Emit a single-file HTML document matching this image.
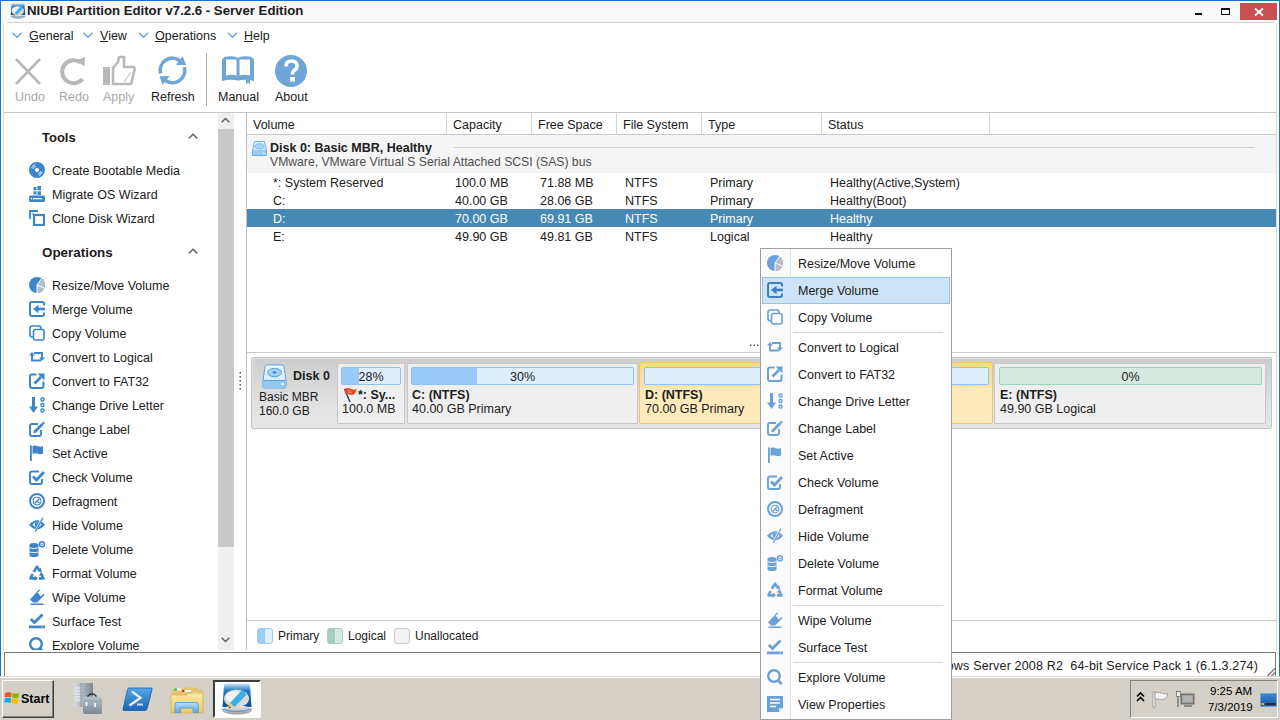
<!DOCTYPE html>
<html><head><meta charset="utf-8">
<style>
*{margin:0;padding:0;box-sizing:border-box}
html,body{width:1280px;height:720px;overflow:hidden;background:#fff}
body{position:relative;font-family:"Liberation Sans",sans-serif;font-size:13px;color:#202020}
.a{position:absolute}
.t{position:absolute;white-space:pre;line-height:16px;font-size:13px}
.b{font-weight:bold}
.hl{position:absolute;height:1px}
.vl{position:absolute;width:1px}
svg{position:absolute;overflow:visible}
</style></head><body>


<svg width="0" height="0" style="position:absolute;left:0;top:0">
<defs>
 <symbol id="i-disc" viewBox="0 0 16 16"><circle cx="8" cy="8" r="8" fill="currentColor"/><circle cx="8" cy="8" r="2" fill="#fff"/><path d="M2.6 6.2 A5.6 5.6 0 0 1 6.2 2.6 M4.1 6.8 A4 4 0 0 1 6.8 4.1 M13.4 9.8 A5.6 5.6 0 0 1 9.8 13.4 M11.9 9.2 A4 4 0 0 1 9.2 11.9" stroke="#fff" stroke-width="0.9" fill="none"/></symbol>
 <symbol id="i-migrate" viewBox="0 0 16 16"><rect x="4.5" y="1" width="3" height="3.3" fill="currentColor"/><rect x="8.5" y="0" width="3.5" height="4.3" fill="currentColor"/><rect x="4.5" y="5.3" width="3" height="3.3" fill="currentColor"/><rect x="8.5" y="5.3" width="3.5" height="3.7" fill="currentColor"/><rect x="0" y="9.5" width="16" height="6.5" rx="1.5" fill="currentColor"/><rect x="4" y="12" width="9" height="1.3" fill="#fff"/><rect x="1.8" y="12" width="1.3" height="1.3" fill="#fff"/></symbol>
 <symbol id="i-clone" viewBox="0 0 16 16"><path d="M1 9 V1 H9" stroke="currentColor" stroke-width="1.8" fill="none"/><rect x="2.6" y="2.6" width="2.2" height="2.2" fill="currentColor" opacity=".5"/><rect x="5" y="5" width="10" height="10" stroke="currentColor" stroke-width="2.2" fill="#fff"/></symbol>
 <symbol id="i-resize" viewBox="0 0 16 16"><circle cx="8" cy="8" r="8" fill="currentColor"/><path d="M8 8 L12.6 1.5 A8 8 0 0 1 8 16 Z" fill="#b5bec8"/><path d="M12.8 1.2 L8 8 L8 16 M8 8 L15.5 11" stroke="#fff" stroke-width="1" fill="none"/></symbol>
 <symbol id="i-merge" viewBox="0 0 16 16"><path d="M15 4.5 V3 Q15 1 13 1 H3 Q1 1 1 3 V13 Q1 15 3 15 H13 Q15 15 15 13 V11.5" stroke="currentColor" stroke-width="2" fill="none"/><path d="M16 8 H8.5" stroke="currentColor" stroke-width="2.6"/><path d="M4 8 L9.5 3.8 L9.5 12.2 Z" fill="currentColor"/></symbol>
 <symbol id="i-copy" viewBox="0 0 16 16"><rect x="1" y="1" width="11" height="11" rx="2.5" stroke="currentColor" stroke-width="1.6" fill="none"/><rect x="4.5" y="4.5" width="10.5" height="10.5" rx="2" stroke="currentColor" stroke-width="1.6" fill="#fff"/></symbol>
 <symbol id="i-logical" viewBox="0 0 16 16"><path d="M3 6 V11.5 H12" stroke="currentColor" stroke-width="1.9" fill="none"/><path d="M5 4 H13 V9" stroke="currentColor" stroke-width="1.9" fill="none"/><path d="M0 6.6 L3 3 L6 6.6 Z M10 8.4 L13 12 L16 8.4 Z" fill="currentColor"/></symbol>
 <symbol id="i-fat" viewBox="0 0 16 16"><path d="M7.5 1.5 H3.2 Q1 1.5 1 3.7 V12.8 Q1 15 3.2 15 H12.3 Q14.5 15 14.5 12.8 V8.5" stroke="currentColor" stroke-width="2" fill="none"/><path d="M5.5 10.5 L12 4" stroke="currentColor" stroke-width="2.8"/><path d="M8.5 0.5 L15.5 0.5 L15.5 7.5 Z" fill="currentColor"/></symbol>
 <symbol id="i-letter" viewBox="0 0 16 16"><rect x="3" y="0" width="3" height="10" fill="currentColor"/><path d="M0 9.5 L9 9.5 L4.5 16 Z" fill="currentColor"/><rect x="12" y="1" width="3" height="3" rx="1.2" stroke="currentColor" stroke-width="1.4" fill="none"/><rect x="12" y="6.5" width="3" height="3" rx="1.2" stroke="currentColor" stroke-width="1.4" fill="none"/><rect x="12" y="12" width="3" height="3" rx="1.2" stroke="currentColor" stroke-width="1.4" fill="none"/></symbol>
 <symbol id="i-label" viewBox="0 0 16 16"><path d="M9 3 H3 Q1 3 1 5 V13 Q1 15 3 15 H10 Q12 15 12 13 V9" stroke="currentColor" stroke-width="1.9" fill="none"/><path d="M5.5 11 L13.5 3" stroke="currentColor" stroke-width="2.8"/><path d="M4.3 12.5 L5 9.5 L7 11.5 Z" fill="currentColor"/><path d="M13.5 1.2 L15.3 3" stroke="currentColor" stroke-width="1.8"/></symbol>
 <symbol id="i-flag" viewBox="0 0 16 16"><rect x="1" y="0.5" width="1.8" height="15.5" fill="currentColor"/><path d="M3.5 1 Q6.5 0 9 1.2 Q11.5 2.2 14 1 V8.6 Q11.5 9.8 9 8.8 Q6.5 7.8 3.5 8.8 Z" fill="currentColor"/></symbol>
 <symbol id="i-check" viewBox="0 0 16 16"><path d="M10 2.5 H3 Q1 2.5 1 4.5 V13 Q1 15 3 15 H11 Q13 15 13 13 V10" stroke="currentColor" stroke-width="1.9" fill="none"/><path d="M4 7.5 L7.5 11 L15 3" stroke="currentColor" stroke-width="2.8" fill="none"/></symbol>
 <symbol id="i-defrag" viewBox="0 0 16 16"><circle cx="8" cy="8" r="7" stroke="currentColor" stroke-width="2" fill="none"/><circle cx="8" cy="8" r="4" stroke="currentColor" stroke-width="1" fill="none"/><path d="M5.5 10.5 L10.5 5.5 M8 8 L10.5 10" stroke="currentColor" stroke-width="1.4"/></symbol>
 <symbol id="i-hide" viewBox="0 0 16 16"><path d="M0 7.8 Q8 -1.5 16 7.8 Q8 17 0 7.8 Z" fill="currentColor"/><path d="M3.3 7.8 Q8 3 12.7 7.8 Q8 12.6 3.3 7.8 Z" fill="#fff"/><circle cx="8" cy="7.8" r="2.4" fill="currentColor"/><path d="M13.5 0.5 L6 15" stroke="#fff" stroke-width="2"/><path d="M13.8 0.8 L6.3 14.8" stroke="currentColor" stroke-width="1.3"/></symbol>
 <symbol id="i-delete" viewBox="0 0 16 16"><path d="M0.5 4 Q0.5 2 5 2 Q9.5 2 9.5 4 V14 Q9.5 16 5 16 Q0.5 16 0.5 14 Z" fill="currentColor"/><path d="M0.5 6.8 Q5 8.3 9.5 6.8 M0.5 11 Q5 12.5 9.5 11" stroke="#fff" stroke-width="0.9" fill="none"/><circle cx="13" cy="3.3" r="2.5" stroke="currentColor" stroke-width="1.6" fill="none"/><path d="M12 3.3 H14" stroke="currentColor" stroke-width="1.1"/></symbol>
 <symbol id="i-format" viewBox="0 0 16 16"><g stroke="currentColor" stroke-width="2.6" fill="none" stroke-linejoin="round"><path d="M4.8 6.8 L8 1.6 L10.2 5.2"/><path d="M3.6 9 L1.5 13.4 H6"/><path d="M10 13.4 H14.5 L12.4 9.6"/></g><g fill="currentColor"><path d="M8.5 6.2 L12.8 7.2 L12 2.8 Z"/><path d="M5.8 10.6 L5.8 16 L9 13.3 Z"/><path d="M10 10.5 L14.6 10.4 L12.2 6.5 Z"/></g></symbol>
 <symbol id="i-wipe" viewBox="0 0 16 16"><path d="M10 0.5 L15.5 6 L8 13.5 L4 13.5 L1 10.5 Z" fill="currentColor"/><path d="M8.5 3.5 L11.5 1.5 L14.5 4.5 L12 7.5 Z" fill="#fff"/><rect x="1.5" y="14.5" width="13" height="1.5" fill="currentColor"/></symbol>
 <symbol id="i-surface" viewBox="0 0 16 16"><path d="M1.8 6 L5.5 9.5 L13.5 1.5" stroke="currentColor" stroke-width="2.8" fill="none"/><rect x="0" y="12.5" width="16" height="2.8" fill="currentColor"/><rect x="12.5" y="13.4" width="2" height="1" fill="#fff" opacity=".6"/></symbol>
 <symbol id="i-explore" viewBox="0 0 16 16"><circle cx="7" cy="7" r="5.8" stroke="currentColor" stroke-width="2.4" fill="none"/><path d="M10.5 11 L14.8 15.2" stroke="currentColor" stroke-width="2.6"/></symbol>
 <symbol id="i-props" viewBox="0 0 16 16"><path d="M0 0 H16 V12 L12 16 H0 Z" fill="currentColor"/><path d="M3 3.5 H13 M3 7 H13 M3 10.5 H9" stroke="#fff" stroke-width="1.6"/><path d="M12 16 V12 H16 Z" fill="#fff" opacity=".7"/></symbol>
 <symbol id="i-chev-up" viewBox="0 0 10 6"><path d="M0.8 5.4 L5 1.2 L9.2 5.4" stroke="currentColor" stroke-width="1.5" fill="none"/></symbol>
<symbol id="i-niubi" viewBox="0 0 32 32">
 <defs>
  <linearGradient id="nb" x1="0" y1="0" x2="0" y2="1"><stop offset="0" stop-color="#cfe3f2"/><stop offset="0.3" stop-color="#1f7fc6"/><stop offset="1" stop-color="#0d4f91"/></linearGradient>
  <linearGradient id="ng" x1="0" y1="0" x2="0" y2="1"><stop offset="0" stop-color="#f0f0f0"/><stop offset="1" stop-color="#9a9a9a"/></linearGradient>
 </defs>
 <path d="M3 2 Q3 0.5 5 0.5 H27 Q29 0.5 29 2 L30.5 24 H1.5 Z" fill="url(#nb)"/>
 <ellipse cx="16" cy="27" rx="15" ry="4.5" fill="url(#ng)"/>
 <path d="M1.5 26 Q16 31 30.5 26" stroke="#4a9ed6" stroke-width="1.2" fill="none"/>
 <ellipse cx="15.5" cy="15.5" rx="12.5" ry="9" fill="#d9d9d9"/>
 <ellipse cx="13" cy="14" rx="8" ry="6" fill="#f4f4f4"/>
 <path d="M9 20 L21 7 L25.5 11.5 L13.5 24 Z" fill="#39aee8"/>
 <path d="M9 20 L13.5 24 L7.5 25.5 Z" fill="#f1c86a"/>
 <path d="M7.5 25.5 L9 23.5 L10 24.5 Z" fill="#222"/>
</symbol>
</defs></svg>

<!-- window frame -->
<div class="a" style="left:0;top:0;width:1280px;height:1px;background:#1a73c9"></div>
<div class="a" style="left:0;top:0;width:1px;height:676px;background:#1a73c9"></div>
<div class="a" style="left:1279px;top:0;width:1px;height:676px;background:#1a73c9"></div>

<!-- title bar -->
<div class="a" style="left:1px;top:1px;width:1278px;height:21px;background:#f9f9f9"></div>
<div class="hl" style="left:7px;top:22px;width:1267px;background:#d2d2d2"></div>
<div class="vl" style="left:3px;top:23px;height:629px;background:#d8d8d8"></div>
<div class="vl" style="left:1276px;top:23px;height:629px;background:#d8d8d8"></div>
<div class="t b" style="left:27px;top:3px;font-size:13.2px">NIUBI Partition Editor v7.2.6 - Server Edition</div>


<!-- app icon -->
<svg style="left:10px;top:3px" width="16" height="16"><use href="#i-niubi" width="16" height="16"/></svg>
<!-- window controls -->
<div class="a" style="left:1195px;top:13px;width:7px;height:2px;background:#111"></div>
<div class="a" style="left:1221px;top:8px;width:9px;height:7px;border:1px solid #111;border-top-width:2px"></div>
<div class="a" style="left:1240px;top:3px;width:37px;height:17px;background:#c75050"></div>
<svg style="left:1254px;top:8px" width="10" height="8" viewBox="0 0 10 8"><path d="M1 0.5 L9 7.5 M9 0.5 L1 7.5" stroke="#fff" stroke-width="1.8"/></svg>

<!-- menu bar -->
<svg style="left:12px;top:32px" width="260" height="8" viewBox="0 0 260 8">
 <g fill="none" stroke="#6b9ed0" stroke-width="1.3">
  <path d="M0.5 0.8 L5 5.3 L9.5 0.8"/>
  <path d="M71.5 0.8 L76 5.3 L80.5 0.8"/>
  <path d="M127 0.8 L131.5 5.3 L136 0.8"/>
  <path d="M216 0.8 L220.5 5.3 L225 0.8"/>
 </g>
</svg>
<div class="t" style="left:29px;top:28px;font-size:12.5px"><u>G</u>eneral</div>
<div class="t" style="left:100px;top:28px;font-size:12.5px"><u>V</u>iew</div>
<div class="t" style="left:155px;top:28px;font-size:12.5px"><u>O</u>perations</div>
<div class="t" style="left:244px;top:28px;font-size:12.5px"><u>H</u>elp</div>

<!-- toolbar -->
<svg style="left:0;top:50px" width="320" height="45" viewBox="0 50 320 45">
 <path d="M16 59 L40 84 M40 59 L16 84" stroke="#b8b8b8" stroke-width="2.6" fill="none"/>
 <path d="M82.5 79 A11.5 11.5 0 1 1 80.5 62.5" stroke="#b8b8b8" stroke-width="4" fill="none"/>
 <path d="M76 60.5 L85 57 L84.5 66.5 Z" fill="#b8b8b8"/>
 <rect x="103" y="67" width="7" height="18" fill="#b8b8b8"/>
 <path d="M113 84 L113 68 L118 62 L119 57 L124 57 L124 67 L133 67 Q135 67 134.5 70 L131 84 Z" fill="none" stroke="#b8b8b8" stroke-width="2.6" stroke-linejoin="round"/>
 <path d="M124 82 L131 72" stroke="#d8d8d8" stroke-width="1.5"/>
 <g stroke="#6ea6d8" stroke-width="3.6" fill="none">
  <path d="M160.6 73.5 A12.25 12.25 0 0 1 180.4 61.1"/>
  <path d="M184.3 67.1 A12.25 12.25 0 0 1 165.5 80.5"/>
 </g>
 <path d="M182.5 56 L186.2 65 L176 65 Z" fill="#6ea6d8"/>
 <path d="M159.5 76.3 L169.5 76 L162.5 85 Z" fill="#6ea6d8"/>
 <path fill-rule="evenodd" fill="#6ea6d8" d="M222 60 Q222 58 224 58 L224 57 Q230 55.5 236.5 57 L238 58 L239.5 57 Q246 55.5 252 57 L252 58 Q254 58 254 60 L254 81 Q246 79 238 80.5 Q230 79 222 81 Z M226 59.5 H236.5 V75.5 Q231 74 226 75.5 Z M239.5 59.5 H250 V75.5 Q245 74 239.5 75.5 Z"/>
 <path d="M246 80 H250 V84.5 L248 82.5 L246 84.5 Z" fill="#6ea6d8"/>
 <circle cx="291" cy="71" r="16" fill="#6ea6d8"/>
 <path d="M286 66.5 Q286 61 291.5 61 Q297 61 297 66 Q297 69 293.5 71 Q292.5 72 292.5 74.5" stroke="#fff" stroke-width="3.6" fill="none"/>
 <rect x="290" y="77" width="5" height="4.5" fill="#fff"/>
</svg>
<div class="vl" style="left:206px;top:53px;height:53px;background:#a8a8a8"></div>
<div class="t" style="left:15px;top:89px;color:#a8a8a8;font-size:12.5px">Undo</div>
<div class="t" style="left:59px;top:89px;color:#a8a8a8;font-size:12.5px">Redo</div>
<div class="t" style="left:103px;top:89px;color:#a8a8a8;font-size:12.5px">Apply</div>
<div class="t" style="left:151px;top:89px;font-size:12.5px">Refresh</div>
<div class="t" style="left:218px;top:89px;font-size:12.5px">Manual</div>
<div class="t" style="left:275px;top:89px;font-size:12.5px">About</div>
<div class="hl" style="left:4px;top:112px;width:1272px;background:#c5cbd1"></div>


<!-- left panel -->
<div class="a" style="left:218px;top:113px;width:16px;height:537px;background:#efefef"></div>
<div class="a" style="left:218px;top:129px;width:16px;height:418px;background:#c9c9c9"></div>
<svg style="left:221px;top:117px;color:#555" width="9" height="6"><use href="#i-chev-up" width="9" height="6"/></svg>
<svg style="left:221px;top:637px;color:#555" width="9" height="6"><g transform="translate(0,6) scale(1,-1)"><use href="#i-chev-up" width="9" height="6"/></g></svg>
<div class="vl" style="left:246px;top:113px;height:537px;background:#b9c1c9"></div>

<div class="t b" style="left:42px;top:130px">Tools</div>
<svg style="left:188px;top:133px;color:#666" width="10" height="6"><use href="#i-chev-up" width="10" height="6"/></svg>
<div class="t b" style="left:42px;top:245px;font-size:13.4px">Operations</div>
<svg style="left:188px;top:248px;color:#666" width="10" height="6"><use href="#i-chev-up" width="10" height="6"/></svg>
<div class="a" style="left:4px;top:113px;width:214px;height:537px;overflow:hidden">
<svg style="left:25px;top:49px;color:#3c86c8" width="16" height="16"><use href="#i-disc" width="16" height="16"/></svg><div class="t" style="left:48px;top:50px;font-size:12.5px">Create Bootable Media</div>
<svg style="left:25px;top:73px;color:#3c86c8" width="16" height="16"><use href="#i-migrate" width="16" height="16"/></svg><div class="t" style="left:48px;top:74px;font-size:12.5px">Migrate OS Wizard</div>
<svg style="left:25px;top:97px;color:#3c86c8" width="16" height="16"><use href="#i-clone" width="16" height="16"/></svg><div class="t" style="left:48px;top:98px;font-size:12.5px">Clone Disk Wizard</div>
<svg style="left:25px;top:164px;color:#3c86c8" width="16" height="16"><use href="#i-resize" width="16" height="16"/></svg><div class="t" style="left:48px;top:165px;font-size:12.5px">Resize/Move Volume</div>
<svg style="left:25px;top:188px;color:#3c86c8" width="16" height="16"><use href="#i-merge" width="16" height="16"/></svg><div class="t" style="left:48px;top:189px;font-size:12.5px">Merge Volume</div>
<svg style="left:25px;top:212px;color:#3c86c8" width="16" height="16"><use href="#i-copy" width="16" height="16"/></svg><div class="t" style="left:48px;top:213px;font-size:12.5px">Copy Volume</div>
<svg style="left:25px;top:236px;color:#3c86c8" width="16" height="16"><use href="#i-logical" width="16" height="16"/></svg><div class="t" style="left:48px;top:237px;font-size:12.5px">Convert to Logical</div>
<svg style="left:25px;top:260px;color:#3c86c8" width="16" height="16"><use href="#i-fat" width="16" height="16"/></svg><div class="t" style="left:48px;top:261px;font-size:12.5px">Convert to FAT32</div>
<svg style="left:25px;top:284px;color:#3c86c8" width="16" height="16"><use href="#i-letter" width="16" height="16"/></svg><div class="t" style="left:48px;top:285px;font-size:12.5px">Change Drive Letter</div>
<svg style="left:25px;top:308px;color:#3c86c8" width="16" height="16"><use href="#i-label" width="16" height="16"/></svg><div class="t" style="left:48px;top:309px;font-size:12.5px">Change Label</div>
<svg style="left:25px;top:332px;color:#3c86c8" width="16" height="16"><use href="#i-flag" width="16" height="16"/></svg><div class="t" style="left:48px;top:333px;font-size:12.5px">Set Active</div>
<svg style="left:25px;top:356px;color:#3c86c8" width="16" height="16"><use href="#i-check" width="16" height="16"/></svg><div class="t" style="left:48px;top:357px;font-size:12.5px">Check Volume</div>
<svg style="left:25px;top:380px;color:#3c86c8" width="16" height="16"><use href="#i-defrag" width="16" height="16"/></svg><div class="t" style="left:48px;top:381px;font-size:12.5px">Defragment</div>
<svg style="left:25px;top:404px;color:#3c86c8" width="16" height="16"><use href="#i-hide" width="16" height="16"/></svg><div class="t" style="left:48px;top:405px;font-size:12.5px">Hide Volume</div>
<svg style="left:25px;top:428px;color:#3c86c8" width="16" height="16"><use href="#i-delete" width="16" height="16"/></svg><div class="t" style="left:48px;top:429px;font-size:12.5px">Delete Volume</div>
<svg style="left:25px;top:452px;color:#3c86c8" width="16" height="16"><use href="#i-format" width="16" height="16"/></svg><div class="t" style="left:48px;top:453px;font-size:12.5px">Format Volume</div>
<svg style="left:25px;top:476px;color:#3c86c8" width="16" height="16"><use href="#i-wipe" width="16" height="16"/></svg><div class="t" style="left:48px;top:477px;font-size:12.5px">Wipe Volume</div>
<svg style="left:25px;top:500px;color:#3c86c8" width="16" height="16"><use href="#i-surface" width="16" height="16"/></svg><div class="t" style="left:48px;top:501px;font-size:12.5px">Surface Test</div>
<svg style="left:25px;top:524px;color:#3c86c8" width="16" height="16"><use href="#i-explore" width="16" height="16"/></svg><div class="t" style="left:48px;top:525px;font-size:12.5px">Explore Volume</div>
</div>


<!-- list header -->
<div class="hl" style="left:247px;top:134px;width:1029px;background:#c5cbd1"></div>
<div class="vl" style="left:446px;top:113px;height:21px;background:#d0d5da"></div>
<div class="vl" style="left:531px;top:113px;height:21px;background:#d0d5da"></div>
<div class="vl" style="left:616px;top:113px;height:21px;background:#d0d5da"></div>
<div class="vl" style="left:701px;top:113px;height:21px;background:#d0d5da"></div>
<div class="vl" style="left:821px;top:113px;height:21px;background:#d0d5da"></div>
<div class="vl" style="left:989px;top:113px;height:21px;background:#d0d5da"></div>
<div class="t" style="left:253px;top:117px;font-size:12.5px">Volume</div>
<div class="t" style="left:453px;top:117px;font-size:12.5px">Capacity</div>
<div class="t" style="left:538px;top:117px;font-size:12.5px">Free Space</div>
<div class="t" style="left:623px;top:117px;font-size:12.5px">File System</div>
<div class="t" style="left:708px;top:117px;font-size:12.5px">Type</div>
<div class="t" style="left:828px;top:117px;font-size:12.5px">Status</div>

<!-- disk group -->
<div class="a" style="left:247px;top:135px;width:1029px;height:38px;background:#f5f5f5"></div>
<div class="hl" style="left:454px;top:147px;width:800px;background:#c8cdd2"></div>
<svg style="left:252px;top:141px" width="15" height="15" viewBox="0 0 15 15">
 <defs><linearGradient id="gd" x1="0" y1="0" x2="0" y2="1"><stop offset="0" stop-color="#eaf4fd"/><stop offset="1" stop-color="#b9dcf8"/></linearGradient></defs>
 <path d="M2.5 0.5 H12.5 L14.5 10 V14.5 H0.5 V10 Z" fill="url(#gd)" stroke="#6eaee6" stroke-width="1"/>
 <path d="M0.5 10 H14.5" stroke="#6eaee6"/>
 <rect x="1" y="10.5" width="13" height="3.5" fill="#9ccdf5"/>
 <ellipse cx="7.5" cy="5.3" rx="4.3" ry="2.6" fill="#a9d3f7" stroke="#6eaee6" stroke-width="0.8"/>
 <circle cx="12" cy="12.3" r="0.8" fill="#fff"/>
</svg>
<div class="t b" style="left:270px;top:140px;font-size:12.5px">Disk 0: Basic MBR, Healthy</div>
<div class="t" style="left:270px;top:154px;font-size:12.2px;color:#4d4d4d">VMware, VMware Virtual S Serial Attached SCSI (SAS) bus</div>

<!-- rows -->
<div class="a" style="left:247px;top:209px;width:1029px;height:18px;background:#4689b5"></div>
<div class="t" style="left:273px;top:175px;font-size:12.5px">*: System Reserved</div>
<div class="t" style="left:455px;top:175px;font-size:12.5px">100.0 MB</div>
<div class="t" style="left:540px;top:175px;font-size:12.5px">71.88 MB</div>
<div class="t" style="left:625px;top:175px;font-size:12.5px">NTFS</div>
<div class="t" style="left:710px;top:175px;font-size:12.5px">Primary</div>
<div class="t" style="left:830px;top:175px;font-size:12.5px">Healthy(Active,System)</div>
<div class="t" style="left:273px;top:193px;font-size:12.5px">C:</div>
<div class="t" style="left:455px;top:193px;font-size:12.5px">40.00 GB</div>
<div class="t" style="left:540px;top:193px;font-size:12.5px">28.06 GB</div>
<div class="t" style="left:625px;top:193px;font-size:12.5px">NTFS</div>
<div class="t" style="left:710px;top:193px;font-size:12.5px">Primary</div>
<div class="t" style="left:830px;top:193px;font-size:12.5px">Healthy(Boot)</div>
<div class="t" style="left:273px;top:211px;font-size:12.5px;color:#fff">D:</div>
<div class="t" style="left:455px;top:211px;font-size:12.5px;color:#fff">70.00 GB</div>
<div class="t" style="left:540px;top:211px;font-size:12.5px;color:#fff">69.91 GB</div>
<div class="t" style="left:625px;top:211px;font-size:12.5px;color:#fff">NTFS</div>
<div class="t" style="left:710px;top:211px;font-size:12.5px;color:#fff">Primary</div>
<div class="t" style="left:830px;top:211px;font-size:12.5px;color:#fff">Healthy</div>
<div class="t" style="left:273px;top:229px;font-size:12.5px">E:</div>
<div class="t" style="left:455px;top:229px;font-size:12.5px">49.90 GB</div>
<div class="t" style="left:540px;top:229px;font-size:12.5px">49.81 GB</div>
<div class="t" style="left:625px;top:229px;font-size:12.5px">NTFS</div>
<div class="t" style="left:710px;top:229px;font-size:12.5px">Logical</div>
<div class="t" style="left:830px;top:229px;font-size:12.5px">Healthy</div>


<!-- splitter -->
<div class="hl" style="left:247px;top:352px;width:1029px;background:#c5cbd1"></div>
<svg style="left:239px;top:372px" width="3" height="19"><g fill="#555"><rect x="0.5" y="0" width="1.5" height="1.5"/><rect x="0.5" y="4" width="1.5" height="1.5"/><rect x="0.5" y="8" width="1.5" height="1.5"/><rect x="0.5" y="12" width="1.5" height="1.5"/><rect x="0.5" y="16" width="1.5" height="1.5"/></g></svg>
<svg style="left:750px;top:344px" width="10" height="3"><g fill="#555"><rect x="0" y="0.5" width="1.5" height="1.5"/><rect x="3.5" y="0.5" width="1.5" height="1.5"/><rect x="7" y="0.5" width="1.5" height="1.5"/></g></svg>

<!-- disk map -->
<div class="a" style="left:251px;top:357px;width:1021px;height:72px;border:1px solid #c4c4c4;border-radius:2px;background:linear-gradient(#cdcdcd,#e2e2e2 70%,#e6e6e6)"></div>
<div class="a" style="left:252px;top:358px;width:1019px;height:70px;border:1px solid #e4e4e4;border-width:1px 0 0 1px"></div>
<svg style="left:262px;top:364px" width="25" height="25" viewBox="0 0 25 25">
 <defs><linearGradient id="gd2" x1="0" y1="0" x2="0" y2="1"><stop offset="0" stop-color="#f4faff"/><stop offset="1" stop-color="#c8e4fb"/></linearGradient></defs>
 <path d="M4 1 H20 Q21.5 1 22 3 L24 16 V23 Q24 24 23 24 H2 Q1 24 1 23 V16 L3 3 Q3.5 1 4 1 Z" fill="url(#gd2)" stroke="#5b9fdd" stroke-width="1"/>
 <rect x="1.5" y="17" width="22" height="6.5" fill="#93c8f3"/>
 <path d="M1.5 16.5 H23.5" stroke="#5b9fdd" stroke-width="1"/>
 <ellipse cx="12.5" cy="8.5" rx="7" ry="4.2" fill="#9fd0f7" stroke="#5b9fdd" stroke-width="1"/>
 <ellipse cx="12.5" cy="8.5" rx="2" ry="1.1" fill="#3d7fc0"/>
 <rect x="19.5" y="19" width="2" height="2" fill="#fff"/>
</svg>
<div class="t b" style="left:293px;top:368px;font-size:12.5px">Disk 0</div>
<div class="t" style="left:259px;top:389px;font-size:12px">Basic MBR</div>
<div class="t" style="left:259px;top:403px;font-size:12px">160.0 GB</div>

<!-- partition *: -->
<div class="a" style="left:337px;top:363px;width:68px;height:61px;background:#efefef;border:1px solid #c8c8c8;border-radius:1px"></div>
<div class="a" style="left:341px;top:367px;width:60px;height:18px;background:#ddeefd;border:1px solid #8ec3f3;border-radius:2px;overflow:hidden"><div class="a" style="left:0;top:0;width:17px;height:16px;background:#99c9f6"></div></div>
<div class="t" style="left:341px;top:369px;width:60px;text-align:center;font-size:12.5px">28%</div>
<svg style="left:343px;top:387px" width="15" height="16" viewBox="0 0 15 16">
 <path d="M1.5 2 L7 15" stroke="#24407a" stroke-width="1.5"/>
 <path d="M1.5 2 Q5 0 8 2 Q11 3.5 14 2 L11.5 7 Q8.5 9 5.5 7 Q4 6.5 3 7.8 Z" fill="#e8461e"/>
 <path d="M4 4 Q6 3 8 4.5 M5 5.8 Q7 5 9 6" stroke="#f7a27d" stroke-width="0.8" fill="none"/>
</svg>
<div class="t b" style="left:358px;top:387px;font-size:12.5px">*: Sy...</div>
<div class="t" style="left:342px;top:401px;font-size:12.5px">100.0 MB</div>

<!-- partition C: -->
<div class="a" style="left:407px;top:363px;width:231px;height:61px;background:#efefef;border:1px solid #c8c8c8;border-radius:1px"></div>
<div class="a" style="left:411px;top:367px;width:223px;height:18px;background:#ddeefd;border:1px solid #8ec3f3;border-radius:2px;overflow:hidden"><div class="a" style="left:0;top:0;width:65px;height:16px;background:#99c9f6"></div></div>
<div class="t" style="left:411px;top:369px;width:223px;text-align:center;font-size:12.5px">30%</div>
<div class="t b" style="left:412px;top:387px;font-size:12.5px">C: (NTFS)</div>
<div class="t" style="left:412px;top:401px;font-size:12.5px">40.00 GB Primary</div>

<!-- partition D: selected -->
<div class="a" style="left:639px;top:362px;width:354px;height:62px;background:linear-gradient(#f5d88c,#f8e2a6 38%,#fdeab9 42%,#fdebbb);border:1px solid #eec46a;border-radius:2px"></div>
<div class="a" style="left:644px;top:367px;width:345px;height:18px;background:#ddeefd;border:1px solid #8ec3f3;border-radius:2px"></div>
<div class="t" style="left:644px;top:369px;width:345px;text-align:center;font-size:12.5px">0%</div>
<div class="t b" style="left:645px;top:387px;font-size:12.5px">D: (NTFS)</div>
<div class="t" style="left:645px;top:401px;font-size:12.5px">70.00 GB Primary</div>

<!-- partition E: -->
<div class="a" style="left:994px;top:363px;width:272px;height:61px;background:#efefef;border:1px solid #c8c8c8;border-radius:1px"></div>
<div class="a" style="left:999px;top:367px;width:263px;height:18px;background:#d6e9e1;border:1px solid #9ed3bc;border-radius:2px"></div>
<div class="t" style="left:999px;top:369px;width:263px;text-align:center;font-size:12.5px">0%</div>
<div class="t b" style="left:1000px;top:387px;font-size:12.5px">E: (NTFS)</div>
<div class="t" style="left:1000px;top:401px;font-size:12.5px">49.90 GB Logical</div>

<!-- legend -->
<div class="hl" style="left:247px;top:620px;width:1029px;background:#c5cbd1"></div>
<div class="a" style="left:257px;top:628px;width:16px;height:16px;border:1px solid #9ccbf3;border-radius:3px;background:linear-gradient(90deg,#9ccdf7 50%,#ddeefd 50%)"></div>
<div class="t" style="left:278px;top:628px;font-size:12px">Primary</div>
<div class="a" style="left:327px;top:628px;width:16px;height:16px;border:1px solid #a7cfbf;border-radius:3px;background:linear-gradient(90deg,#a8cfbe 50%,#d6e9e1 50%)"></div>
<div class="t" style="left:348px;top:628px;font-size:12px">Logical</div>
<div class="a" style="left:394px;top:628px;width:16px;height:16px;border:1px solid #c8c8c8;border-radius:3px;background:#f2f2f2"></div>
<div class="t" style="left:415px;top:628px;font-size:12px">Unallocated</div>


<!-- status bar -->
<div class="a" style="left:4px;top:652px;width:1272px;height:24px;background:#fff;border-top:1px solid #7a7a7a;border-left:1px solid #7a7a7a"></div>
<div class="t" style="left:600px;top:658px;font-size:12.5px;letter-spacing:0.17px;width:658px;text-align:right">Windows Server 2008 R2  64-bit Service Pack 1 (6.1.3.274)</div>
<svg style="left:1264px;top:664px" width="12" height="12" viewBox="0 0 12 12"><path d="M11.5 4 L3.5 12 M11.5 8 L7.5 12" stroke="#7a7a7a" stroke-width="1.3"/></svg>
<div class="vl" style="left:1275px;top:652px;height:24px;background:#7a7a7a"></div>

<!-- taskbar -->
<div class="a" style="left:0;top:676px;width:1280px;height:44px;background:#d4d0c8;box-shadow:inset 0 1px 0 #d8d5ce,inset 0 2px 0 #fff"></div>
<div class="a" style="left:2px;top:680px;width:52px;height:38px;border:1px solid;border-color:#fff #404040 #404040 #fff;background:#d4d0c8;box-shadow:inset -1px -1px 0 #808080"></div>
<svg style="left:4px;top:690px" width="16" height="16" viewBox="0 0 16 16">
 <path d="M1 3 Q4 1.5 7.5 3 L7 7.5 Q4 6 1 7.5 Z" fill="#f25022"/>
 <path d="M8.5 3 Q12 4.5 15 3 L14.5 7.5 Q11.5 9 8 7.5 Z" fill="#7fba00"/>
 <path d="M1 8.5 Q4 7 7 8.5 L6.5 13 Q3.5 11.5 0.5 13 Z" fill="#00a4ef"/>
 <path d="M8 8.5 Q11 10 14.5 8.5 L14 13 Q11 14.5 7.5 13 Z" fill="#ffb900"/>
</svg>
<div class="t b" style="left:21px;top:691px;font-size:12.5px;color:#000">Start</div>


<!-- taskbar icons -->
<svg style="left:72px;top:682px" width="34" height="34" viewBox="0 0 34 34">
 <defs>
  <linearGradient id="tw" x1="0" y1="0" x2="1" y2="0"><stop offset="0" stop-color="#d8dde2"/><stop offset="0.45" stop-color="#aeb6bd"/><stop offset="1" stop-color="#7d868e"/></linearGradient>
  <linearGradient id="tb" x1="0" y1="0" x2="0" y2="1"><stop offset="0" stop-color="#b9c3cb"/><stop offset="1" stop-color="#7a8791"/></linearGradient>
 </defs>
 <rect x="2" y="1" width="19" height="24" fill="url(#tw)"/>
 <path d="M3 6 H10 M3 9 H10 M3 12 H10 M3 15 H10 M3 18 H10" stroke="#eef2f5" stroke-width="1"/>
 <path d="M9 1 V25" stroke="#8a939a" stroke-width="1"/>
 <path d="M11 17 Q11 14.5 14 14.5 H27 Q30 15 30 18 V31 Q30 32 28 32 H13 Q11 31.5 11 30 Z" fill="url(#tb)"/>
 <path d="M15.5 14.5 Q20 9 24.5 14.5" stroke="#2d3338" stroke-width="1.4" fill="none"/>
 <rect x="13.5" y="20" width="2" height="4" fill="#eef" /><rect x="22" y="21" width="2" height="4" fill="#eef"/>
 <path d="M11 19 H30" stroke="#93a0aa" stroke-width="0.8"/>
</svg>
<svg style="left:122px;top:687px" width="31" height="25" viewBox="0 0 31 25">
 <defs><linearGradient id="ps" x1="0" y1="0" x2="0" y2="1"><stop offset="0" stop-color="#54a8e6"/><stop offset="1" stop-color="#1b64b8"/></linearGradient></defs>
 <path d="M7 1 H29 Q30.5 1 30 2.5 L25 22 Q24.5 23.5 23 23.5 H2 Q0.5 23.5 1 22 L5.5 2.5 Q6 1 7 1 Z" fill="url(#ps)" stroke="#1a5aa3" stroke-width="0.8"/>
 <path d="M10 4.5 L18.5 11 L7.5 18.5" stroke="#fff" stroke-width="2.2" fill="none"/>
 <path d="M15 17.5 H21" stroke="#c8e2f7" stroke-width="2"/>
</svg>
<svg style="left:170px;top:685px" width="34" height="31" viewBox="0 0 34 31">
 <defs><linearGradient id="fo" x1="0" y1="0" x2="0" y2="1"><stop offset="0" stop-color="#fbeaa8"/><stop offset="1" stop-color="#ecc868"/></linearGradient>
 <linearGradient id="fb" x1="0" y1="0" x2="0" y2="1"><stop offset="0" stop-color="#b6e0fb"/><stop offset="1" stop-color="#52a7e6"/></linearGradient></defs>
 <path d="M2 4 H12 L13 2.5 H27 L28 5 H32 V27 H2 Z" fill="#e4c36e"/>
 <rect x="4" y="3.5" width="7" height="2" fill="#fff"/><rect x="4.3" y="3.5" width="2.5" height="2" fill="#18b31a"/>
 <rect x="12" y="5" width="9" height="2" fill="#fff"/><rect x="12" y="5" width="2.5" height="2" fill="#d42a1a"/>
 <rect x="19" y="7.5" width="9" height="2" fill="#fff"/><rect x="19" y="7.5" width="2.5" height="2" fill="#2e8fd8"/>
 <path d="M1 10 H17 L18.5 8 H33 V28 H1 Z" fill="url(#fo)" stroke="#d6ae55" stroke-width="0.8"/>
 <path d="M5 27.5 V20 Q5 17.5 7.5 17.5 H26 Q28.5 17.5 28.5 20 V27.5 H23 V23 H10.5 V27.5 Z" fill="url(#fb)" stroke="#4b9ad8" stroke-width="0.8"/>
</svg>
<div class="a" style="left:213px;top:680px;width:48px;height:38px;background:#fff;border:2px solid;border-color:#3c3c3c #fbfbfb #fbfbfb #3c3c3c"></div>
<svg style="left:221px;top:683px" width="32" height="32"><use href="#i-niubi" width="32" height="32"/></svg>

<!-- tray -->
<div class="a" style="left:1130px;top:680px;width:148px;height:38px;border:1px solid;border-color:#808080 #fff #fff #808080"></div>
<svg style="left:1136px;top:692px" width="9" height="10" viewBox="0 0 9 10"><path d="M1 4.5 L4.5 1 L8 4.5 M1 9 L4.5 5.5 L8 9" stroke="#000" stroke-width="1.6" fill="none"/></svg>
<svg style="left:1152px;top:691px" width="18" height="17" viewBox="0 0 18 17">
 <rect x="1" y="1" width="2" height="15" fill="#fff" stroke="#777" stroke-width="0.6"/>
 <path d="M3 2 Q6 0.5 9 2 Q12 3.5 16 2.5 Q15 6 12.5 8 Q9.5 9.5 6 8 Q4.5 7.5 3 8.5 Z" fill="#f4f4f4" stroke="#8a8a8a" stroke-width="0.7"/>
</svg>
<svg style="left:1176px;top:691px" width="20" height="18" viewBox="0 0 20 18">
 <rect x="5" y="3" width="13" height="10" fill="#8c8c8c" stroke="#5a5a5a" stroke-width="0.8"/>
 <rect x="6.5" y="4.5" width="10" height="7" fill="#b4b4b4"/>
 <path d="M8 15 H16" stroke="#666" stroke-width="1.4"/>
 <path d="M2 1 V16 M2 3 H5 M1 1 H3" stroke="#555" stroke-width="1"/>
 <rect x="0.5" y="0.5" width="4" height="5" fill="#eee" stroke="#666" stroke-width="0.7"/>
</svg>
<div class="t" style="left:1210px;top:683px;font-size:11.5px;color:#000">9:25 AM</div>
<div class="t" style="left:1208px;top:699px;font-size:11.5px;color:#000">7/3/2019</div>
<svg style="left:1260px;top:693px" width="17" height="14" viewBox="0 0 17 14">
 <defs><linearGradient id="sd" x1="0" y1="0" x2="0" y2="1"><stop offset="0" stop-color="#3c86d2"/><stop offset="1" stop-color="#1a5aa6"/></linearGradient></defs>
 <rect x="0.5" y="0.5" width="16" height="13" fill="url(#sd)" stroke="#6aa5dd" stroke-width="0.8"/>
 <rect x="5" y="10" width="11" height="2" fill="#2a2a2a"/>
 <rect x="1.5" y="10" width="2.5" height="2" fill="#f0a030"/>
</svg>


<!-- context menu -->
<div class="a" style="left:760px;top:248px;width:192px;height:472px;background:#fff;border:1px solid #a0a0a0"></div>
<div class="a" style="left:761px;top:249px;width:29px;height:470px;background:#fbfbfb"></div>
<div class="vl" style="left:790px;top:249px;height:470px;background:#e2e2e2"></div>
<div class="a" style="left:762px;top:277px;width:188px;height:27px;background:#cde4f7;border:1px solid #93c3ec"></div>
<svg style="left:767px;top:255px;color:#6aa1d8" width="16" height="16"><use href="#i-resize" width="16" height="16"/></svg><div class="t" style="left:798px;top:256px;font-size:12.5px">Resize/Move Volume</div>
<svg style="left:767px;top:282px;color:#3d7fc4" width="16" height="16"><use href="#i-merge" width="16" height="16"/></svg><div class="t" style="left:798px;top:283px;font-size:12.5px">Merge Volume</div>
<svg style="left:767px;top:309px;color:#6aa1d8" width="16" height="16"><use href="#i-copy" width="16" height="16"/></svg><div class="t" style="left:798px;top:310px;font-size:12.5px">Copy Volume</div>
<div class="hl" style="left:793px;top:332px;width:150px;background:#d7d7d7"></div>
<svg style="left:767px;top:339px;color:#6aa1d8" width="16" height="16"><use href="#i-logical" width="16" height="16"/></svg><div class="t" style="left:798px;top:340px;font-size:12.5px">Convert to Logical</div>
<svg style="left:767px;top:366px;color:#6aa1d8" width="16" height="16"><use href="#i-fat" width="16" height="16"/></svg><div class="t" style="left:798px;top:367px;font-size:12.5px">Convert to FAT32</div>
<svg style="left:767px;top:393px;color:#6aa1d8" width="16" height="16"><use href="#i-letter" width="16" height="16"/></svg><div class="t" style="left:798px;top:394px;font-size:12.5px">Change Drive Letter</div>
<svg style="left:767px;top:420px;color:#6aa1d8" width="16" height="16"><use href="#i-label" width="16" height="16"/></svg><div class="t" style="left:798px;top:421px;font-size:12.5px">Change Label</div>
<svg style="left:767px;top:447px;color:#6aa1d8" width="16" height="16"><use href="#i-flag" width="16" height="16"/></svg><div class="t" style="left:798px;top:448px;font-size:12.5px">Set Active</div>
<svg style="left:767px;top:474px;color:#6aa1d8" width="16" height="16"><use href="#i-check" width="16" height="16"/></svg><div class="t" style="left:798px;top:475px;font-size:12.5px">Check Volume</div>
<svg style="left:767px;top:501px;color:#6aa1d8" width="16" height="16"><use href="#i-defrag" width="16" height="16"/></svg><div class="t" style="left:798px;top:502px;font-size:12.5px">Defragment</div>
<svg style="left:767px;top:528px;color:#6aa1d8" width="16" height="16"><use href="#i-hide" width="16" height="16"/></svg><div class="t" style="left:798px;top:529px;font-size:12.5px">Hide Volume</div>
<svg style="left:767px;top:555px;color:#6aa1d8" width="16" height="16"><use href="#i-delete" width="16" height="16"/></svg><div class="t" style="left:798px;top:556px;font-size:12.5px">Delete Volume</div>
<svg style="left:767px;top:582px;color:#6aa1d8" width="16" height="16"><use href="#i-format" width="16" height="16"/></svg><div class="t" style="left:798px;top:583px;font-size:12.5px">Format Volume</div>
<div class="hl" style="left:793px;top:605px;width:150px;background:#d7d7d7"></div>
<svg style="left:767px;top:612px;color:#6aa1d8" width="16" height="16"><use href="#i-wipe" width="16" height="16"/></svg><div class="t" style="left:798px;top:613px;font-size:12.5px">Wipe Volume</div>
<svg style="left:767px;top:639px;color:#6aa1d8" width="16" height="16"><use href="#i-surface" width="16" height="16"/></svg><div class="t" style="left:798px;top:640px;font-size:12.5px">Surface Test</div>
<div class="hl" style="left:793px;top:662px;width:150px;background:#d7d7d7"></div>
<svg style="left:767px;top:669px;color:#6aa1d8" width="16" height="16"><use href="#i-explore" width="16" height="16"/></svg><div class="t" style="left:798px;top:670px;font-size:12.5px">Explore Volume</div>
<svg style="left:767px;top:696px;color:#6aa1d8" width="16" height="16"><use href="#i-props" width="16" height="16"/></svg><div class="t" style="left:798px;top:697px;font-size:12.5px">View Properties</div>

</body></html>
